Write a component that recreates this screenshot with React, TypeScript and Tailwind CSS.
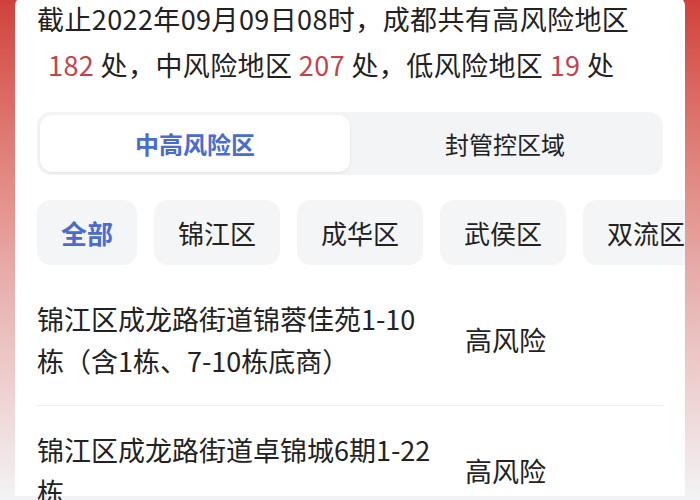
import React from "react";

const districts = ["全部", "锦江区", "成华区", "武侯区", "双流区"];

const areas = [
    { name: "锦江区成龙路街道锦蓉佳苑1-10栋（含1栋、7-10栋底商）", level: "高风险" },
    { name: "锦江区成龙路街道卓锦城6期1-22栋", level: "高风险" },
];

export default function App() {
    return (
        <div
            className="h-[500px] overflow-hidden px-[15px] bg-gradient-to-b from-[#d0403c] via-[#e9b5b4] via-60% to-[#f3f3f5]"
            style={{ fontFamily: '"Noto Sans CJK SC", "Noto Sans", sans-serif' }}
        >
            <div className="h-full bg-white rounded-t-[10px] px-[22px] text-[#222]">
                {/* Summary */}
                <div className="-mt-[4px] text-[27px] leading-[46px] tracking-[0.4px]">
                    <p>截止2022年09月09日08时，成都共有高风险地区</p>
                    <p className="pl-[11px]">
                        <span className="text-[#c4424b]">182</span> 处，中风险地区{" "}
                        <span className="text-[#c4424b]">207</span> 处，低风险地区{" "}
                        <span className="text-[#c4424b]">19</span> 处
                    </p>
                </div>

                {/* Tabs */}
                <div className="mt-[24px] h-[63px] rounded-[14px] bg-[#f3f4f6] p-[3px] flex">
                    <div className="w-[310px] rounded-[12px] bg-white shadow-[0_1px_3px_rgba(0,0,0,0.08)] flex items-center justify-center text-[24px] font-bold text-[#4a6ccc]">
                        中高风险区
                    </div>
                    <div className="flex-1 flex items-center justify-center text-[24px] text-[#222]">
                        封管控区域
                    </div>
                </div>

                {/* District chips */}
                <div className="mt-[25px] flex gap-[17px] overflow-hidden -mr-[22px]">
                    {districts.map((d, i) => (
                        <div
                            key={d}
                            className={`h-[65px] shrink-0 rounded-[14px] bg-[#f4f5f7] flex items-center px-[24px] text-[26px] ${
                                i === 0 ? "font-bold text-[#4a6ccc]" : "text-[#222]"
                            }`}
                        >
                            {d}
                        </div>
                    ))}
                </div>

                {/* Area list */}
                <div className="mt-[10px]">
                    {areas.map((a, i) => (
                        <div
                            key={a.name}
                            className={`flex items-center py-[23px] ${i === 0 ? "border-b border-[#eeeeee]" : ""}`}
                        >
                            <div className="w-[398px] text-[27px] leading-[42px]">{a.name}</div>
                            <div className="ml-[30px] text-[27px]">{a.level}</div>
                        </div>
                    ))}
                </div>
            </div>
        </div>
    );
}
